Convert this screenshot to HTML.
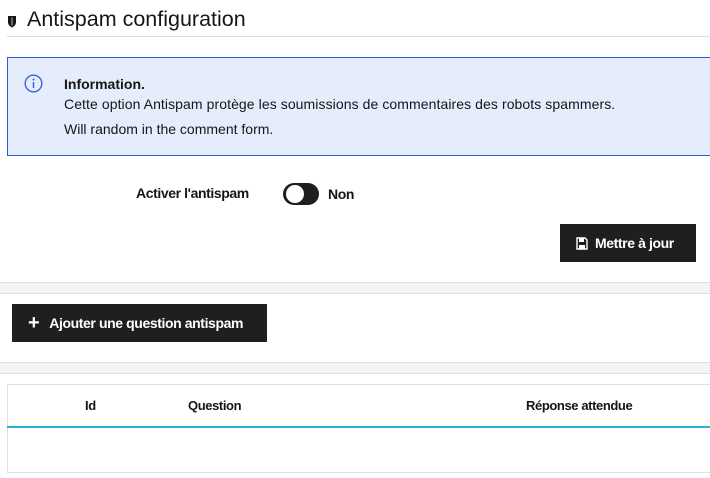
<!DOCTYPE html>
<html><head><meta charset="utf-8"><style>
*{margin:0;padding:0;box-sizing:border-box}
body{width:710px;height:478px;background:#fff;font-family:"Liberation Sans",sans-serif;color:#161616;position:relative;overflow:hidden}
.a{position:absolute}
.cond{font-family:"Liberation Sans Narrow","Liberation Sans",sans-serif;font-weight:bold;font-stretch:condensed;letter-spacing:-0.4px}
.btn{background:#1f1f1f;color:#fff;font-size:14px;display:flex;align-items:center}
</style></head><body>
<svg class="a" style="left:7px;top:15px" width="10" height="13" viewBox="0 0 10 13"><path d="M1 1h8v6c0 3-2 4.5-4 5.5C3 11.5 1 10 1 7z" fill="#161616"/><path d="M5 2.5v8" stroke="#fff" stroke-width="1.2" opacity=".6"/></svg>
<div class="a" style="left:27px;top:7px;font-size:21.5px;color:#161616">Antispam configuration</div>
<div class="a" style="left:7px;top:36px;width:703px;height:1px;background:#dcdcdc"></div>
<div class="a" style="left:7px;top:57px;width:704px;height:99px;background:#e5ecfb;border:1px solid #2f5bd8"></div>
<svg class="a" style="left:24px;top:74px" width="19" height="19" viewBox="0 0 19 19"><circle cx="9.5" cy="9.5" r="8.3" fill="none" stroke="#3a63e0" stroke-width="1.4"/><circle cx="9.5" cy="5.6" r="1" fill="#3a63e0"/><path d="M9.5 8v6" stroke="#3a63e0" stroke-width="1.5"/></svg>
<div class="a" style="left:64px;top:76px;font-size:14px;font-weight:bold">Information.</div>
<div class="a" style="left:64px;top:96px;font-size:14px;letter-spacing:0.08px">Cette option Antispam protège les soumissions de commentaires des robots spammers.</div>
<div class="a" style="left:64px;top:121px;font-size:14px">Will random in the comment form.</div>
<div class="a cond" style="left:136px;top:185px;font-size:14px">Activer l'antispam</div>
<div class="a" style="left:283px;top:183px;width:36px;height:22px;border-radius:11px;background:#1f1f1f"></div>
<div class="a" style="left:286px;top:185px;width:18px;height:18px;border-radius:9px;background:#fff"></div>
<div class="a cond" style="left:328px;top:186px;font-size:14px">Non</div>
<div class="a btn cond" style="left:560px;top:224px;width:136px;height:38px;padding-left:16px"><svg width="12" height="13" viewBox="0 0 12 13" style="margin-right:7px"><path d="M1 1h8l2 2v9H1z" fill="none" stroke="#fff" stroke-width="1.4"/><path d="M3 1h5v4H3z M3 8h6v4H3z" fill="#fff"/></svg>Mettre à jour</div>
<div class="a" style="left:0;top:282px;width:710px;height:12px;background:#f4f4f4;border-top:1px solid #e0e0e0;border-bottom:1px solid #e0e0e0"></div>
<div class="a btn cond" style="left:12px;top:304px;width:255px;height:38px;padding-left:16px"><span style="font-size:20px;margin-right:10px;line-height:1">+</span>Ajouter une question antispam</div>
<div class="a" style="left:0;top:362px;width:710px;height:12px;background:#f4f4f4;border-top:1px solid #e0e0e0;border-bottom:1px solid #e0e0e0"></div>
<div class="a" style="left:7px;top:384px;width:704px;height:89px;border:1px solid #e0e0e0"></div>
<div class="a cond" style="left:85px;top:398px;font-size:13px">Id</div>
<div class="a cond" style="left:188px;top:398px;font-size:13px">Question</div>
<div class="a cond" style="left:526px;top:398px;font-size:13px">Réponse attendue</div>
<div class="a" style="left:7px;top:426px;width:703px;height:2px;background:#29b4d4"></div>
</body></html>
